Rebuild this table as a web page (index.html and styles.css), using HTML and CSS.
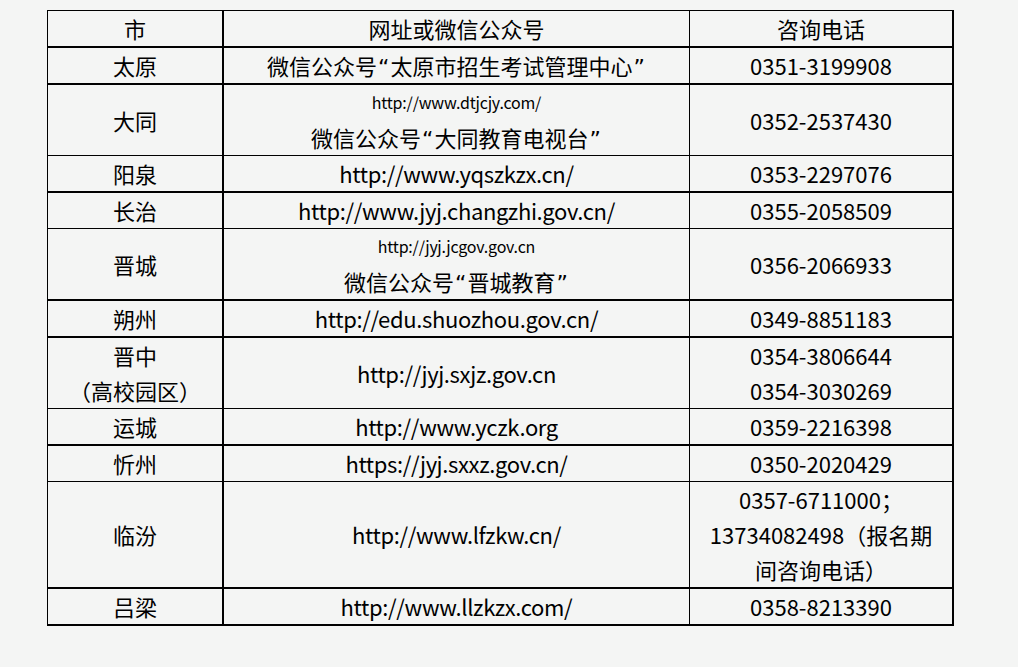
FILE: index.html
```html
<!DOCTYPE html>
<html lang="zh-CN">
<head>
<meta charset="utf-8">
<title>招生考试机构联系方式</title>
<link rel="stylesheet" href="styles.css">
</head>
<body>
<div class="page">
  <table class="contacts">
    <colgroup>
      <col class="c-city">
      <col class="c-site">
      <col class="c-tel">
    </colgroup>
    <tr class="thick">
      <td>市</td><td>网址或微信公众号</td><td>咨询电话</td>
    </tr>
    <tr class="thick">
      <td>太原</td><td>微信公众号<span class="q">“</span>太原市招生考试管理中心<span class="q">”</span></td><td>0351-3199908</td>
    </tr>
    <tr>
      <td>大同</td>
      <td><div class="line small">http://www.dtjcjy.com/</div><div class="line">微信公众号<span class="q">“</span>大同教育电视台<span class="q">”</span></div></td>
      <td>0352-2537430</td>
    </tr>
    <tr class="thick">
      <td>阳泉</td><td class="url">http://www.yqszkzx.cn/</td><td>0353-2297076</td>
    </tr>
    <tr>
      <td>长治</td><td class="url">http://www.jyj.changzhi.gov.cn/</td><td>0355-2058509</td>
    </tr>
    <tr class="thick">
      <td>晋城</td>
      <td><div class="line small">http://jyj.jcgov.gov.cn</div><div class="line">微信公众号<span class="q">“</span>晋城教育<span class="q">”</span></div></td>
      <td>0356-2066933</td>
    </tr>
    <tr class="thick">
      <td>朔州</td><td class="url">http://edu.shuozhou.gov.cn/</td><td>0349-8851183</td>
    </tr>
    <tr>
      <td><div class="line">晋中</div><div class="line">（高校园区）</div></td>
      <td class="url">http://jyj.sxjz.gov.cn</td>
      <td><div class="line">0354-3806644</div><div class="line">0354-3030269</div></td>
    </tr>
    <tr class="thick">
      <td>运城</td><td class="url">http://www.yczk.org</td><td>0359-2216398</td>
    </tr>
    <tr>
      <td>忻州</td><td class="url">https://jyj.sxxz.gov.cn/</td><td>0350-2020429</td>
    </tr>
    <tr class="thick">
      <td>临汾</td><td class="url">http://www.lfzkw.cn/</td>
      <td><div class="line">0357-6711000；</div><div class="line">13734082498（报名期</div><div class="line">间咨询电话）</div></td>
    </tr>
    <tr class="thick">
      <td>吕梁</td><td class="url">http://www.llzkzx.com/</td><td>0358-8213390</td>
    </tr>
  </table>
</div>
</body>
</html>
```

FILE: styles.css
```css
html, body {
  margin: 0;
  padding: 0;
  background: #f4f5f4;
}

body {
  font-family: "Noto Sans CJK SC", "Noto Sans", sans-serif;
  color: #000;
}

.page {
  padding: 10px 0 0 47px;
}

.contacts {
  border-collapse: separate;
  border-spacing: 0;
  border-top: 1px solid #000;
  border-left: 1px solid #000;
  table-layout: fixed;
  width: 907px;
}

.c-city { width: 176px; }
.c-site { width: 466px; }
.c-tel { width: 264px; }

.contacts td {
  padding: 0;
  height: 35px;
  text-align: center;
  vertical-align: middle;
  font-size: 22px;
  line-height: 35px;
  border-bottom: 1px solid #000;
  border-right: 1px solid #000;
  white-space: nowrap;
}

.contacts td:first-child,
.contacts td:last-child {
  border-right-width: 2px;
}

.contacts tr.thick td {
  border-bottom-width: 2px;
}

.line {
  height: 35px;
  line-height: 35px;
}

.url {
  letter-spacing: -0.35px;
}

.q {
  font-family: "DejaVu Sans", sans-serif;
  line-height: 0;
  padding: 0 1px;
}

.small {
  font-size: 16px;
  letter-spacing: -0.2px;
}
```
